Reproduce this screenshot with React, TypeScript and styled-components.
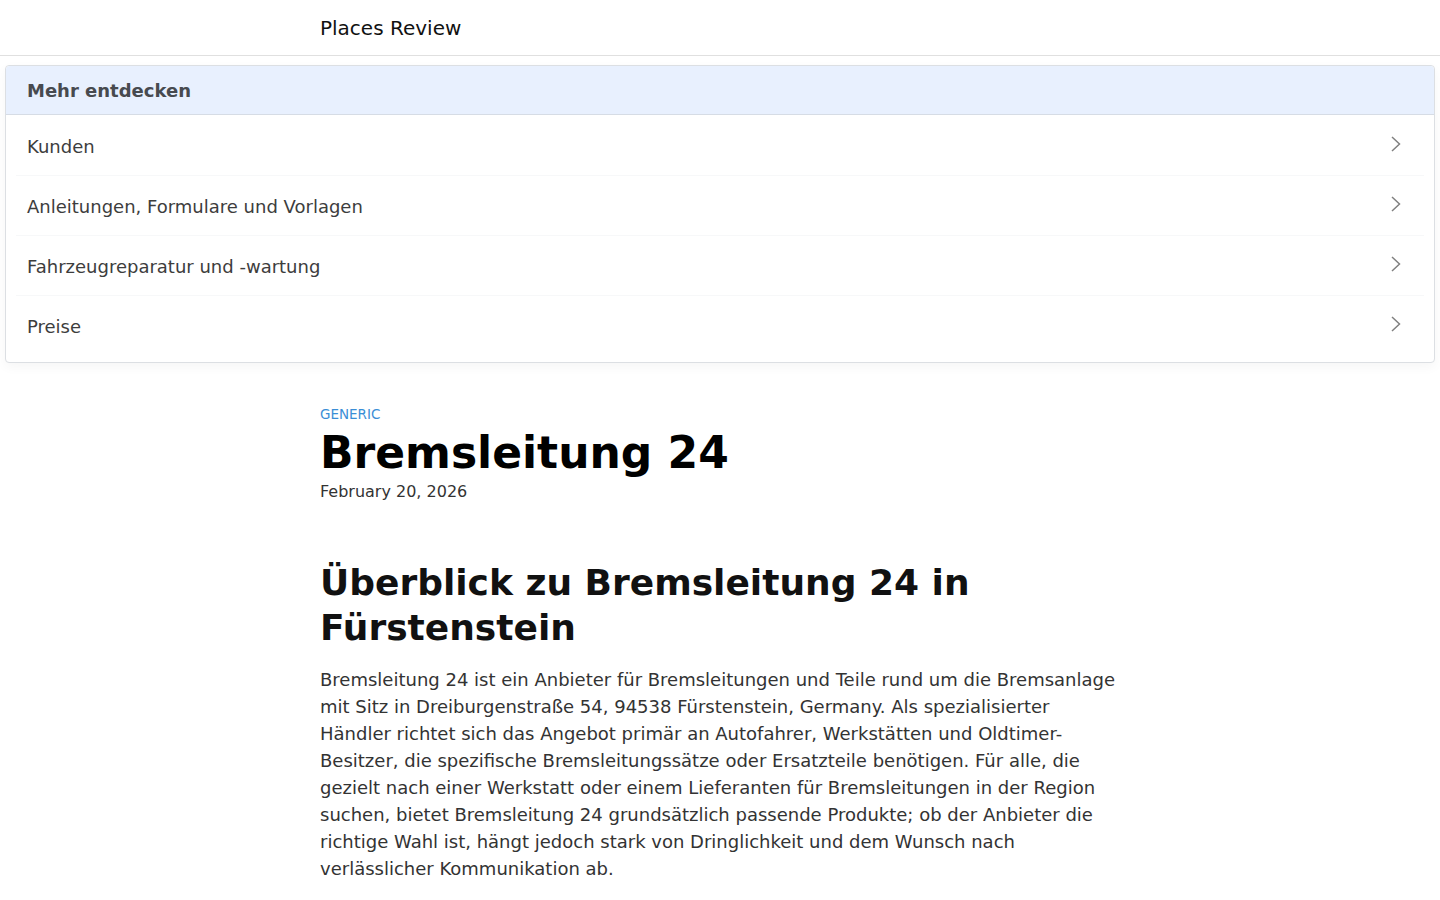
import React from "react";
import styled, { createGlobalStyle } from "styled-components";

const Global = createGlobalStyle`
  html, body { margin: 0; padding: 0; background: #fff; }
  body { font-family: "DejaVu Sans", "Liberation Sans", sans-serif; color: #333; }
  * { box-sizing: border-box; }
`;

const TopBar = styled.header`
  height: 56px;
  border-bottom: 1px solid #e0e0e0;
  display: flex;
  align-items: center;
`;

const TopInner = styled.div`
  width: 800px;
  margin: 0 auto;
  font-size: 20px;
  color: #111;
  padding-top: 1px;
`;

const Panel = styled.section`
  margin: 9px 5px 0;
  border: 1px solid #dcdfe3;
  border-radius: 4px;
  background: #fff;
  box-shadow: 0 4px 12px rgba(0, 0, 0, 0.04);
`;

const PanelHead = styled.div`
  height: 49px;
  display: flex;
  align-items: center;
  padding: 1px 21px 0;
  background: #e8f0fe;
  border-bottom: 1px solid #d6dce5;
  border-radius: 4px 4px 0 0;
  font-weight: bold;
  font-size: 18px;
  color: #474a4f;
`;

const List = styled.ul`
  list-style: none;
  margin: 0;
  padding: 0 10px 7px;
`;

const Item = styled.li<{ $last?: boolean }>`
  height: 60px;
  display: flex;
  align-items: center;
  justify-content: space-between;
  padding: 2px 22px 0 11px;
  font-size: 18px;
  color: #3d3d3d;
  box-shadow: ${(p) => (p.$last ? "none" : "0 1px 0 #f7f8f9")};
`;

const Chevron = styled.svg`
  width: 12px;
  height: 18px;
  margin-top: -5px;
  flex: none;
`;

const Main = styled.main`
  width: 800px;
  margin: 0 auto;
  padding-top: 43px;
`;

const Category = styled.div`
  font-size: 13.5px;
  color: #3a8ed6;
`;

const Title = styled.h1`
  margin: 5px 0 0;
  font-size: 44px;
  line-height: 52px;
  color: #000;
`;

const DateLine = styled.div`
  font-size: 16px;
  color: #333;
  margin-top: 3px;
`;

const SectionTitle = styled.h2`
  margin: 59px 0 0;
  font-size: 36px;
  line-height: 45px;
  color: #111;
`;

const Para = styled.p`
  margin: 16px 0 0;
  font-size: 18px;
  line-height: 27px;
  color: #333;
`;

const items = [
  "Kunden",
  "Anleitungen, Formulare und Vorlagen",
  "Fahrzeugreparatur und -wartung",
  "Preise",
];

export default function App() {
  return (
    <>
      <Global />
      <TopBar>
        <TopInner>Places Review</TopInner>
      </TopBar>
      <Panel>
        <PanelHead>Mehr entdecken</PanelHead>
        <List>
          {items.map((t, i) => (
            <Item key={t} $last={i === items.length - 1}>
              <span>{t}</span>
              <Chevron viewBox="0 0 12 18" fill="none">
                <path d="M2 2 L9.5 9 L2 16" stroke="#808080" strokeWidth="1.5" />
              </Chevron>
            </Item>
          ))}
        </List>
      </Panel>
      <Main>
        <Category>GENERIC</Category>
        <Title>Bremsleitung 24</Title>
        <DateLine>February 20, 2026</DateLine>
        <SectionTitle>Überblick zu Bremsleitung 24 in Fürstenstein</SectionTitle>
        <Para>
          Bremsleitung 24 ist ein Anbieter für Bremsleitungen und Teile rund um die Bremsanlage mit
          Sitz in Dreiburgenstraße 54, 94538 Fürstenstein, Germany. Als spezialisierter Händler
          richtet sich das Angebot primär an Autofahrer, Werkstätten und Oldtimer-Besitzer, die
          spezifische Bremsleitungssätze oder Ersatzteile benötigen. Für alle, die gezielt nach
          einer Werkstatt oder einem Lieferanten für Bremsleitungen in der Region suchen, bietet
          Bremsleitung 24 grundsätzlich passende Produkte; ob der Anbieter die richtige Wahl ist,
          hängt jedoch stark von Dringlichkeit und dem Wunsch nach verlässlicher Kommunikation ab.
        </Para>
      </Main>
    </>
  );
}
